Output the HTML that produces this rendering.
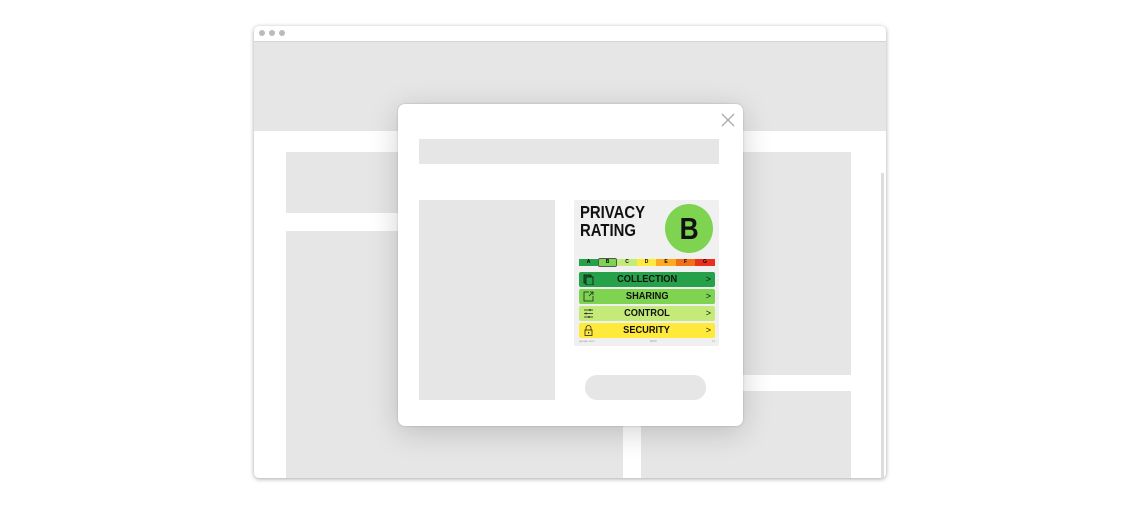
<!DOCTYPE html><html><head><style>
*{margin:0;padding:0;box-sizing:border-box}
body{width:1141px;height:521px;background:#fff;position:relative;overflow:hidden;font-family:"Liberation Sans",sans-serif}
.a{position:absolute}
.g{background:#e6e6e7}
.row{position:absolute;left:579px;width:136px;height:15px;border-radius:2px;font-weight:bold;font-size:10.5px;text-align:center;line-height:15px;color:#111}
.row b{display:inline-block;transform:scaleX(.88)}
.row i{position:absolute;right:4px;font-style:normal;font-weight:normal;font-size:9px}
.row svg{position:absolute;left:4px;top:2px}
.sc{position:absolute;top:259px;height:7px;font-size:5px;font-weight:bold;text-align:center;line-height:7px}
</style></head><body>
<div class="a" style="left:254px;top:26px;width:632px;height:452px;background:#fff;border-radius:5px;box-shadow:0 1px 5px rgba(0,0,0,.35);overflow:hidden">
 <div class="a" style="left:0;top:15px;width:632px;height:1px;background:#d4d4d4"></div>
 <div class="a" style="left:5px;top:4px;width:6px;height:6px;border-radius:50%;background:#bbb"></div>
 <div class="a" style="left:15px;top:4px;width:6px;height:6px;border-radius:50%;background:#bbb"></div>
 <div class="a" style="left:25px;top:4px;width:6px;height:6px;border-radius:50%;background:#bbb"></div>
 <div class="a g" style="left:0;top:16px;width:632px;height:89px"></div>
 <div class="a g" style="left:32px;top:126px;width:120px;height:61px"></div>
 <div class="a g" style="left:32px;top:205px;width:337px;height:260px"></div>
 <div class="a g" style="left:480px;top:126px;width:117px;height:223px"></div>
 <div class="a g" style="left:387px;top:365px;width:210px;height:100px"></div>
 <div class="a" style="left:627px;top:147px;width:3px;height:305px;background:#ddd"></div>
</div>
<div class="a" style="left:398px;top:104px;width:345px;height:322px;background:#fff;border-radius:7px;box-shadow:0 6px 30px rgba(0,0,0,.18),0 0 2px rgba(0,0,0,.2)"></div>
<svg class="a" style="left:721px;top:113px" width="14" height="14"><path d="M1 1L13 13M13 1L1 13" stroke="#aaa" stroke-width="1.3"/></svg>
<div class="a g" style="left:419px;top:139px;width:300px;height:25px"></div>
<div class="a g" style="left:419px;top:200px;width:136px;height:200px"></div>
<div class="a g" style="left:585px;top:375px;width:121px;height:25px;border-radius:12px"></div>
<div class="a" style="left:574px;top:200px;width:145px;height:146px;background:#f0f0f0;border-radius:2px"></div>
<div class="a" style="left:580px;top:203px;font-size:17.5px;line-height:18px;font-weight:bold;color:#111;transform:scaleX(.85);transform-origin:left top">PRIVACY<br>RATING</div>
<div class="a" style="left:665px;top:204px;width:48px;height:49px;border-radius:50%;background:#7ed350;text-align:center;font-size:31px;line-height:49px;font-weight:bold;color:#111"><span style="display:inline-block;transform:scaleX(.85)">B</span></div>
<div class="sc" style="left:579px;width:19px;background:#27a04a">A</div>
<div class="sc" style="left:598px;width:19px;background:#7ed350;border:1px solid #555;border-radius:2px;top:258px;height:9px">B</div>
<div class="sc" style="left:617px;width:20px;background:#c4ea7a">C</div>
<div class="sc" style="left:637px;width:19px;background:#ffe93a">D</div>
<div class="sc" style="left:656px;width:20px;background:#fbaa22">E</div>
<div class="sc" style="left:676px;width:19px;background:#f0701a">F</div>
<div class="sc" style="left:695px;width:20px;background:#e8301e">G</div>
<div class="row" style="top:272px;background:#27a04a"><svg width="11" height="11"><rect x="1" y="1" width="7" height="8" fill="#1a6a30" stroke="#111" stroke-width=".8"/><rect x="3" y="3" width="7" height="8" fill="#27a04a" stroke="#111" stroke-width=".8"/></svg><b>COLLECTION</b><i>&gt;</i></div>
<div class="row" style="top:289px;background:#7ed350"><svg width="11" height="11"><path d="M6 1H1V10H10V5M6 5L10 1M7 1H10V4" fill="none" stroke="#222" stroke-width=".8"/></svg><b>SHARING</b><i>&gt;</i></div>
<div class="row" style="top:306px;background:#c4ea7a"><svg width="11" height="11"><path d="M1 2H10M1 5.5H10M1 9H10" stroke="#222" stroke-width=".8"/><path d="M7 1V3M3 4.5V6.5M6 8V10" stroke="#222"/></svg><b>CONTROL</b><i>&gt;</i></div>
<div class="row" style="top:323px;background:#ffe93a"><svg width="11" height="11"><path d="M3 5V3A2.5 2.5 0 0 1 8 3V5" fill="none" stroke="#222" stroke-width=".8"/><rect x="2" y="5" width="7" height="5.5" fill="none" stroke="#222" stroke-width=".8"/><rect x="5" y="7" width="1.2" height="1.5" fill="#222"/></svg><b>SECURITY</b><i>&gt;</i></div>
<div class="a" style="left:579px;top:339px;width:136px;font-size:3px;color:#999;display:flex;justify-content:space-between"><span>google.com</span><span>2020</span><span>v1</span></div>
</body></html>
